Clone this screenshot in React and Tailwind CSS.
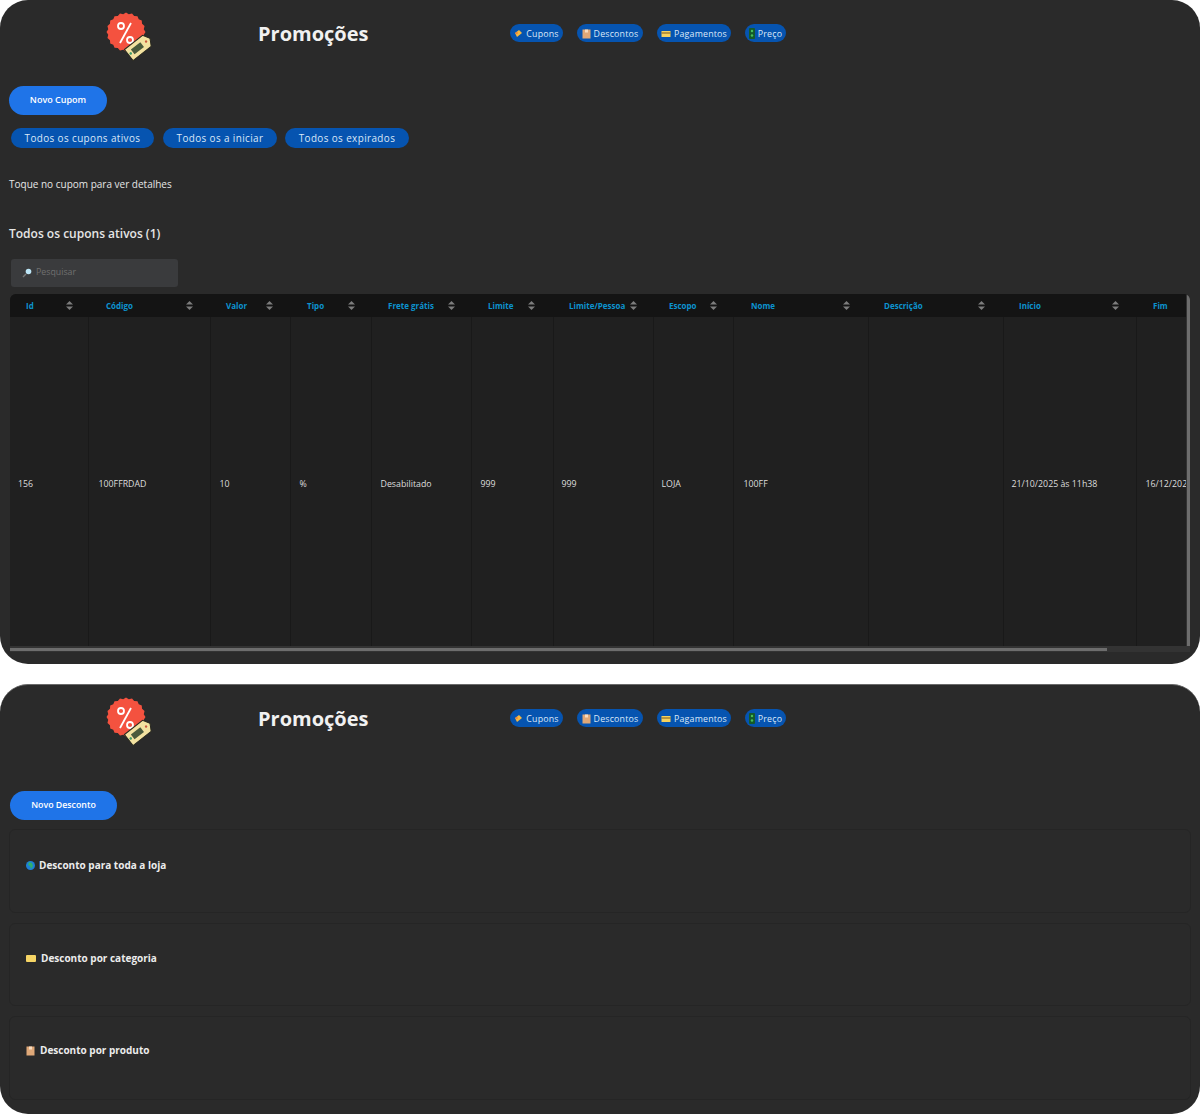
import React from 'react'

const font = { fontFamily: '"Open Sans", "Noto Sans", sans-serif' }

const columns = [
  { name: 'Id', w: 78, value: '156', pad: 'pl-[16px]', sort: 'pr-[15px]', text: 'pl-[8px]' },
  { name: 'Código', w: 122, value: '100FFRDAD', pad: 'pl-[18px]', sort: 'pr-[17px]', text: 'pl-[10px]' },
  { name: 'Valor', w: 80, value: '10', pad: 'pl-[16px]', sort: 'pr-[17px]', text: 'pl-[9px]' },
  { name: 'Tipo', w: 81, value: '%', pad: 'pl-[17px]', sort: 'pr-[16px]', text: 'pl-[9px]' },
  { name: 'Frete grátis', w: 100, value: 'Desabilitado', pad: 'pl-[17px]', sort: 'pr-[16px]', text: 'pl-[9px]' },
  { name: 'Limite', w: 82, value: '999', pad: 'pl-[17px]', sort: 'pr-[18px]', text: 'pl-[9px]' },
  { name: 'Limite/Pessoa', w: 100, value: '999', pad: 'pl-[16px]', sort: 'pr-[16px]', text: 'pl-[8px]' },
  { name: 'Escopo', w: 80, value: 'LOJA', pad: 'pl-[16px]', sort: 'pr-[16px]', text: 'pl-[8px]' },
  { name: 'Nome', w: 135, value: '100FF', pad: 'pl-[18px]', sort: 'pr-[18px]', text: 'pl-[10px]' },
  { name: 'Descrição', w: 135, value: '', pad: 'pl-[16px]', sort: 'pr-[18px]', text: 'pl-[8px]' },
  { name: 'Início', w: 133, value: '21/10/2025 às 11h38', pad: 'pl-[16px]', sort: 'pr-[17px]', text: 'pl-[8px]' },
  { name: 'Fim', w: 70, value: '16/12/2025', pad: 'pl-[17px]', sort: '', text: 'pl-[9px]' },
]

// red seal with a scalloped edge
const sealPoints = Array.from({ length: 40 }, (_, i) => {
  const r = i % 2 === 0 ? 19.5 : 18
  const a = (i / 40) * Math.PI * 2
  return `${20 + r * Math.cos(a)},${20 + r * Math.sin(a)}`
}).join(' ')

const Logo = () => (
  <svg width="46" height="50" viewBox="0 0 46 50" className="shrink-0 self-start mt-[12px]">
    <polygon points={sealPoints} fill="#f4523f" />
    <path d="M25 11L14 31" stroke="#fff" strokeWidth="1.800" />
    <circle cx="15" cy="14" r="3" fill="none" stroke="#fff" strokeWidth="1.800" />
    <circle cx="24" cy="28" r="3" fill="none" stroke="#fff" strokeWidth="1.800" />
    <g transform="rotate(-38 33 35)">
      <path d="M20 28h23l4 7-4 7H20z" fill="#f3e2a0" stroke="#2a2a20" strokeWidth="1" />
      <rect x="25" y="32" width="12" height="6" fill="#4a5a3c" />
      <circle cx="22.500" cy="35" r="1.300" fill="#3f9c6a" />
      <circle cx="42" cy="35" r="1.200" fill="#c9593f" />
    </g>
  </svg>
)

const TicketIcon = () => (
  <svg width="9" height="9" viewBox="0 0 9 9">
    <path d="M1 4l4-3 3 3-5 4z" fill="#f5b942" />
    <path d="M1 4l2 1 1-1-1-1z" fill="#f0763a" />
  </svg>
)

const BoxIcon = () => (
  <svg width="9" height="10" viewBox="0 0 9 10">
    <rect x="0.500" y="0.500" width="8" height="9" fill="#dfa878" />
    <rect x="3" y="0.500" width="3" height="3" fill="#f7dcc0" />
  </svg>
)

const CardIcon = () => (
  <svg width="10" height="8" viewBox="0 0 10 8">
    <rect x="0.500" y="1" width="9" height="6" fill="#f6d25e" />
    <rect x="0.500" y="2.500" width="9" height="1" fill="#7a5a1c" />
  </svg>
)

const DollarIcon = () => (
  <svg width="6" height="11" viewBox="0 0 6 11">
    <rect width="6" height="11" rx="1" fill="#145a2a" />
    <circle cx="3" cy="3" r="1.200" fill="#49c05a" />
    <circle cx="3" cy="7.500" r="1.200" fill="#49c05a" />
  </svg>
)

const GlobeIcon = () => (
  <svg width="9" height="9" viewBox="0 0 9 9">
    <circle cx="4.500" cy="4.500" r="4.500" fill="#1d7fd6" />
    <path d="M3 1l3 1 1 3-2 3-1-3-2-1z" fill="#2fae6d" />
  </svg>
)

const FolderIcon = () => (
  <svg width="10" height="8" viewBox="0 0 10 8">
    <rect y="1" width="10" height="7" rx="1" fill="#f6d565" />
  </svg>
)

const MagnifierIcon = () => (
  <svg width="10" height="10" viewBox="0 0 10 10">
    <path d="M1 9l3-3" stroke="#777" strokeWidth="1.400" />
    <circle cx="6.500" cy="3.500" r="2.800" fill="#bde6f7" />
  </svg>
)

const SortIcon = () => (
  <svg width="7" height="9" viewBox="0 0 7 9" className="shrink-0">
    <path d="M3.500 0L7 3.500H0z" fill="#7d7d7d" />
    <path d="M3.500 9L7 5.500H0z" fill="#7d7d7d" />
  </svg>
)

const navItems = [
  { label: 'Cupons', icon: <TicketIcon />, w: 'w-[53px]' },
  { label: 'Descontos', icon: <BoxIcon />, w: 'w-[66px]' },
  { label: 'Pagamentos', icon: <CardIcon />, w: 'w-[74px]' },
  { label: 'Preço', icon: <DollarIcon />, w: 'w-[41px]' },
]

const Header = () => (
  <header className="flex items-center h-[66px] pl-[106px]">
    <Logo />
    <h1 className="ml-[106px] mt-[1px] w-[141px] shrink-0 text-[20px] leading-none font-bold text-[#f1f1f1]">Promoções</h1>
    <nav className="ml-[111px] flex items-center gap-[14px]">
      {navItems.map((item) => (
        <span
          key={item.label}
          className={`${item.w} h-[18px] rounded-full bg-[#0654b0] flex items-center justify-center gap-[3px] text-[8.800px] leading-[12px] pt-[1px] text-[#dbe8f8] tracking-[0.2px] whitespace-nowrap`}
        >
          {item.icon}
          {item.label}
        </span>
      ))}
    </nav>
  </header>
)

const CouponTable = () => (
  <div className="relative mx-[10px] mt-[7px] h-[358px] overflow-hidden rounded-t-[6px] bg-[#202020]">
    <table className="table-fixed border-collapse w-[1196px] h-[358px]">
      <thead>
        <tr className="h-[23px] bg-[#141414]">
          {columns.map((col) => (
            <th key={col.name} style={{ width: col.w }} className="p-0">
              <div className={`flex items-center justify-between ${col.pad} ${col.sort}`}>
                <span className="text-[8px] font-bold text-[#0c93cf] whitespace-nowrap">{col.name}</span>
                {col.sort && <SortIcon />}
              </div>
            </th>
          ))}
        </tr>
      </thead>
      <tbody>
        <tr>
          {columns.map((col) => (
            <td
              key={col.name}
              className={`p-0 border-r border-[#191919] text-[8.800px] text-[#dddddd] whitespace-nowrap overflow-hidden ${col.text}`}
            >
              {col.value}
            </td>
          ))}
        </tr>
      </tbody>
    </table>
    {/* scrollbars */}
    <div className="absolute left-0 right-0 bottom-0 h-[6px] bg-[#333333]">
      <div className="h-[3px] mt-[2px] w-[1097px] bg-[#6d6d6d]"></div>
    </div>
    <div className="absolute top-0 right-0 bottom-[6px] w-[4px] bg-[#333333]">
      <div className="w-[3px] h-full ml-[1px] bg-[#6d6d6d]"></div>
    </div>
  </div>
)

const filters = [
  { label: 'Todos os cupons ativos', w: 'w-[143px]', ml: '' },
  { label: 'Todos os a iniciar', w: 'w-[114px]', ml: 'ml-[9px]' },
  { label: 'Todos os expirados', w: 'w-[124px]', ml: 'ml-[8px]' },
]

const sections = [
  { label: 'Desconto para toda a loja', icon: <GlobeIcon />, gap: 'gap-[4px]', pt: 'pt-[29px]' },
  { label: 'Desconto por categoria', icon: <FolderIcon />, gap: 'gap-[5px]', pt: 'pt-[28px]' },
  { label: 'Desconto por produto', icon: <BoxIcon />, gap: 'gap-[5px]', pt: 'pt-[27px]' },
]

const App = () => {
  return (
    <div className="bg-white h-[1114px] flex flex-col gap-[20px] overflow-hidden" style={font}>
      <section className="h-[664px] rounded-[28px] bg-[#2a2a2a] overflow-hidden">
        <Header />
        <button
          type="button"
          className="block ml-[9px] mt-[20px] w-[98px] h-[29px] pb-[1px] rounded-full bg-[#1f74e8] text-[9px] font-semibold text-white"
        >
          Novo Cupom
        </button>
        <div className="flex ml-[11px] mt-[13px]">
          {filters.map((f) => (
            <span
              key={f.label}
              className={`${f.w} ${f.ml} h-[20px] rounded-full bg-[#0654b0] flex items-center justify-center text-[9.900px] tracking-[0.4px] text-[#dbe8f8] whitespace-nowrap`}
            >
              {f.label}
            </span>
          ))}
        </div>
        <p className="ml-[9px] mt-[29px] text-[10px] leading-[14px] text-[#e6e6e6]">Toque no cupom para ver detalhes</p>
        <h2 className="ml-[9px] mt-[35px] text-[12px] leading-[16px] font-semibold text-[#e6e6e6]">Todos os cupons ativos (1)</h2>
        <div className="ml-[11px] mt-[17px] w-[167px] h-[28px] rounded-[3px] bg-[#3a3b3d] flex items-center gap-[4px] pl-[11px] text-[8.800px] text-[#707070]">
          <MagnifierIcon />
          Pesquisar
        </div>
        <CouponTable />
      </section>

      <section className="flex-1 rounded-[28px] bg-[#2a2a2a] border-t border-[#6a6a6a] overflow-hidden">
        <Header />
        <button
          type="button"
          className="block ml-[10px] mt-[40px] w-[107px] h-[29px] rounded-full bg-[#1f74e8] text-[8.800px] font-semibold text-white"
        >
          Novo Desconto
        </button>
        <div className="flex flex-col gap-[10px] mx-[9px] mt-[9px]">
          {sections.map((s) => (
            <div key={s.label} className={`h-[83.500px] rounded-[6px] border border-[#252525] pl-[16px] ${s.pt}`}>
              <div className={`flex items-center ${s.gap} text-[10px] leading-[13px] font-bold text-[#ececec]`}>
                {s.icon}
                {s.label}
              </div>
            </div>
          ))}
        </div>
      </section>
    </div>
  )
}

export default App
